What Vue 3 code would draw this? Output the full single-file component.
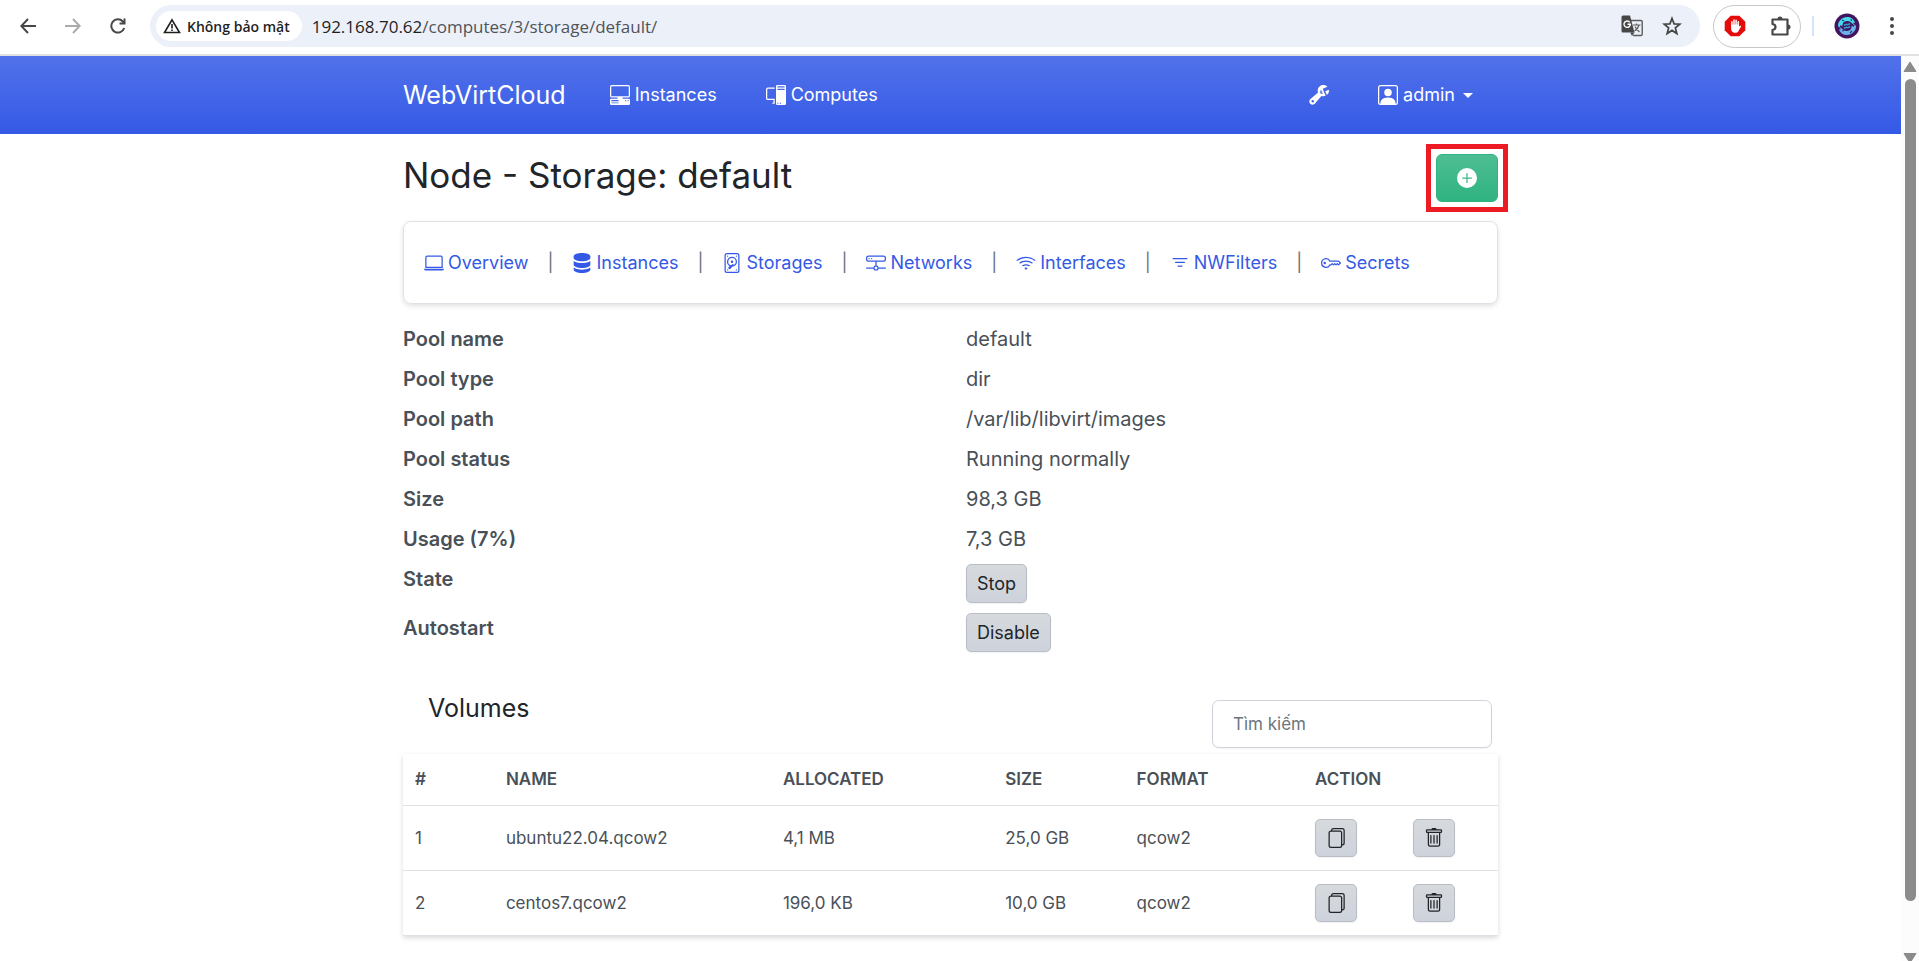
<script setup>
import { ref, computed } from 'vue'

const icons = {
  pcHorizontal: ['M1.5 0A1.5 1.5 0 0 0 0 1.5v7A1.5 1.5 0 0 0 1.5 10H6v1H1a1 1 0 0 0-1 1v3a1 1 0 0 0 1 1h14a1 1 0 0 0 1-1v-3a1 1 0 0 0-1-1h-5v-1h4.5A1.5 1.5 0 0 0 16 8.5v-7A1.5 1.5 0 0 0 14.5 0zm0 1h13a.5.5 0 0 1 .5.5v7a.5.5 0 0 1-.5.5h-13a.5.5 0 0 1-.5-.5v-7a.5.5 0 0 1 .5-.5M12 12.5a.5.5 0 1 1 1 0 .5.5 0 0 1-1 0m2 0a.5.5 0 1 1 1 0 .5.5 0 0 1-1 0M1.5 12h5a.5.5 0 0 1 0 1h-5a.5.5 0 0 1 0-1M1 14.25a.25.25 0 0 1 .25-.25h5.5a.25.25 0 1 1 0 .5h-5.5a.25.25 0 0 1-.25-.25'],
  pc: ['M8 1a1 1 0 0 1 1-1h6a1 1 0 0 1 1 1v14a1 1 0 0 1-1 1H9a1 1 0 0 1-1-1zm1 13.5a.5.5 0 1 0 1 0 .5.5 0 0 0-1 0m2 0a.5.5 0 1 0 1 0 .5.5 0 0 0-1 0M9.5 1a.5.5 0 0 0 0 1h5a.5.5 0 0 0 0-1zM9 3.5a.5.5 0 0 0 .5.5h5a.5.5 0 0 0 0-1h-5a.5.5 0 0 0-.5.5M1.5 2A1.5 1.5 0 0 0 0 3.5v7A1.5 1.5 0 0 0 1.5 12H6v2h-.5a.5.5 0 0 0 0 1H7v-4H1.5a.5.5 0 0 1-.5-.5v-7a.5.5 0 0 1 .5-.5H7V2z'],
  wrench: ['M16 4.5a4.5 4.5 0 0 1-1.703 3.526L13 5l2.959-1.11q.04.3.041.61', 'M11.5 9c.653 0 1.273-.139 1.833-.39L12 5.5 11 3l3.826-1.53A4.5 4.5 0 0 0 7.29 6.092l-6.116 5.096a2.583 2.583 0 1 0 3.638 3.638L9.908 8.71A4.5 4.5 0 0 0 11.5 9m-1.292-4.361-.596.893.809-.27a.25.25 0 0 1 .287.377l-.596.893.809-.27.158.475-1.5.5a.25.25 0 0 1-.287-.376l.596-.893-.809.27a.25.25 0 0 1-.287-.377l.596-.893-.809.27-.158-.475 1.5-.5a.25.25 0 0 1 .287.376M3 14a1 1 0 1 1 0-2 1 1 0 0 1 0 2'],
  person: ['M11 6a3 3 0 1 1-6 0 3 3 0 0 1 6 0', 'M2 0a2 2 0 0 0-2 2v12a2 2 0 0 0 2 2h12a2 2 0 0 0 2-2V2a2 2 0 0 0-2-2zm12 1a1 1 0 0 1 1 1v12a1 1 0 0 1-1 1v-1c0-1-1-4-6-4s-6 3-6 4v1a1 1 0 0 1-1-1V2a1 1 0 0 1 1-1z'],
  laptop: ['M13.5 3a.5.5 0 0 1 .5.5V11H2V3.5a.5.5 0 0 1 .5-.5zm-11-1A1.5 1.5 0 0 0 1 3.5V12h14V3.5A1.5 1.5 0 0 0 13.5 2zM0 12.5h16a1.5 1.5 0 0 1-1.5 1.5h-13A1.5 1.5 0 0 1 0 12.5'],
  server: ['M1.333 2.667C1.333 1.194 4.318 0 8 0s6.667 1.194 6.667 2.667V4c0 1.473-2.985 2.667-6.667 2.667S1.333 5.473 1.333 4z', 'M1.333 6.334v3C1.333 10.805 4.318 12 8 12s6.667-1.194 6.667-2.667V6.334a6.5 6.5 0 0 1-1.458.79C11.81 7.684 9.967 8 8 8s-3.809-.317-5.208-.876a6.5 6.5 0 0 1-1.458-.79z', 'M14.667 11.668a6.5 6.5 0 0 1-1.458.789c-1.4.56-3.242.876-5.21.876-1.966 0-3.809-.316-5.208-.876a6.5 6.5 0 0 1-1.458-.79v1.666C1.333 14.806 4.318 16 8 16s6.667-1.194 6.667-2.667z'],
  hdd: ['M12 2.5a.5.5 0 1 1-1 0 .5.5 0 0 1 1 0m0 11a.5.5 0 1 1-1 0 .5.5 0 0 1 1 0m-7.5.5a.5.5 0 1 0 0-1 .5.5 0 0 0 0 1M5 2.5a.5.5 0 1 1-1 0 .5.5 0 0 1 1 0M8 8a1 1 0 1 0 0-2 1 1 0 0 0 0 2', 'M12 7a4 4 0 0 1-3.937 4c-.537.813-1.02 1.515-1.181 1.677a1.102 1.102 0 0 1-1.56-1.559c.1-.098.396-.314.795-.588A4 4 0 0 1 8 3a4 4 0 0 1 4 4m-1 0a3 3 0 1 0-3.891 2.865c.667-.44 1.396-.91 1.955-1.268.224-.144.483.115.34.34l-.62.96A3 3 0 0 0 11 7', 'M2 2a2 2 0 0 1 2-2h8a2 2 0 0 1 2 2v12a2 2 0 0 1-2 2H4a2 2 0 0 1-2-2zm2-1a1 1 0 0 0-1 1v12a1 1 0 0 0 1 1h8a1 1 0 0 0 1-1V2a1 1 0 0 0-1-1z'],
  network: ['M4.5 5a.5.5 0 1 0 0-1 .5.5 0 0 0 0 1M3 4.5a.5.5 0 1 1-1 0 .5.5 0 0 1 1 0', 'M0 4a2 2 0 0 1 2-2h12a2 2 0 0 1 2 2v1a2 2 0 0 1-2 2H8.5v3a1.5 1.5 0 0 1 1.5 1.5h5.5a.5.5 0 0 1 0 1H10A1.5 1.5 0 0 1 8.5 14h-1A1.5 1.5 0 0 1 6 12.5H.5a.5.5 0 0 1 0-1H6A1.5 1.5 0 0 1 7.5 10V7H2a2 2 0 0 1-2-2zm1 0v1a1 1 0 0 0 1 1h12a1 1 0 0 0 1-1V4a1 1 0 0 0-1-1H2a1 1 0 0 0-1 1m6 7.5v1a.5.5 0 0 0 .5.5h1a.5.5 0 0 0 .5-.5v-1a.5.5 0 0 0-.5-.5h-1a.5.5 0 0 0-.5.5'],
  wifi: ['M15.384 6.115a.485.485 0 0 0-.047-.736A12.44 12.44 0 0 0 8 3C5.259 3 2.723 3.882.663 5.379a.485.485 0 0 0-.048.736.52.52 0 0 0 .668.05A11.45 11.45 0 0 1 8 4c2.507 0 4.827.802 6.716 2.164.205.148.49.13.668-.049', 'M13.229 8.271a.482.482 0 0 0-.063-.745A9.46 9.46 0 0 0 8 6c-1.905 0-3.68.56-5.166 1.526a.48.48 0 0 0-.063.745.525.525 0 0 0 .652.065A8.46 8.46 0 0 1 8 7a8.46 8.46 0 0 1 4.576 1.336c.206.132.48.108.653-.065m-2.183 2.183c.226-.226.185-.605-.1-.75A6.5 6.5 0 0 0 8 9c-1.06 0-2.062.254-2.946.704-.285.145-.326.524-.1.75l.015.015c.16.16.407.19.611.09A5.5 5.5 0 0 1 8 10c.868 0 1.69.201 2.42.56.203.1.45.07.61-.091zM9.06 12.44c.196-.196.198-.52-.04-.66A2 2 0 0 0 8 11.5a2 2 0 0 0-1.02.28c-.238.14-.236.464-.04.66l.706.706a.5.5 0 0 0 .707 0l.707-.707z'],
  filter: ['M6 10.5a.5.5 0 0 1 .5-.5h3a.5.5 0 0 1 0 1h-3a.5.5 0 0 1-.5-.5m-2-3a.5.5 0 0 1 .5-.5h7a.5.5 0 0 1 0 1h-7a.5.5 0 0 1-.5-.5m-2-3a.5.5 0 0 1 .5-.5h11a.5.5 0 0 1 0 1h-11a.5.5 0 0 1-.5-.5'],
  key: ['M0 8a4 4 0 0 1 7.465-2H14a.5.5 0 0 1 .354.146l1.5 1.5a.5.5 0 0 1 0 .708l-1.5 1.5a.5.5 0 0 1-.708 0L13 9.207l-.646.647a.5.5 0 0 1-.708 0L11 9.207l-.646.647a.5.5 0 0 1-.708 0L9 9.207l-.646.647A.5.5 0 0 1 8 10h-.535A4 4 0 0 1 0 8m4-3a3 3 0 1 0 2.712 4.285A.5.5 0 0 1 7.163 9h.63l.853-.854a.5.5 0 0 1 .708 0l.646.647.646-.647a.5.5 0 0 1 .708 0l.646.647.646-.647a.5.5 0 0 1 .708 0l.646.647.793-.793-1-1h-6.63a.5.5 0 0 1-.451-.285A3 3 0 0 0 4 5', 'M4 8a1 1 0 1 1-2 0 1 1 0 0 1 2 0'],
  plus: ['M16 8A8 8 0 1 1 0 8a8 8 0 0 1 16 0M8.5 4.5a.5.5 0 0 0-1 0v3h-3a.5.5 0 0 0 0 1h3v3a.5.5 0 0 0 1 0v-3h3a.5.5 0 0 0 0-1h-3z'],
  files: ['M13 0H6a2 2 0 0 0-2 2 2 2 0 0 0-2 2v10a2 2 0 0 0 2 2h7a2 2 0 0 0 2-2 2 2 0 0 0 2-2V2a2 2 0 0 0-2-2m0 13V4a2 2 0 0 0-2-2H5a1 1 0 0 1 1-1h7a1 1 0 0 1 1 1v10a1 1 0 0 1-1 1M3 4a1 1 0 0 1 1-1h7a1 1 0 0 1 1 1v10a1 1 0 0 1-1 1H4a1 1 0 0 1-1-1z'],
  trash: ['M5.5 5.5A.5.5 0 0 1 6 6v6a.5.5 0 0 1-1 0V6a.5.5 0 0 1 .5-.5m2.5 0a.5.5 0 0 1 .5.5v6a.5.5 0 0 1-1 0V6a.5.5 0 0 1 .5-.5m3 .5a.5.5 0 0 0-1 0v6a.5.5 0 0 0 1 0z', 'M14.5 3a1 1 0 0 1-1 1H13v9a2 2 0 0 1-2 2H5a2 2 0 0 1-2-2V4h-.5a1 1 0 0 1-1-1V2a1 1 0 0 1 1-1H6a1 1 0 0 1 1-1h2a1 1 0 0 1 1 1h3.5a1 1 0 0 1 1 1zM4.118 4 4 4.059V13a1 1 0 0 0 1 1h6a1 1 0 0 0 1-1V4.059L11.882 4zM2.5 3h11V2h-11z']
}

const tabs = [
  { label: 'Overview', icon: 'laptop' },
  { label: 'Instances', icon: 'server' },
  { label: 'Storages', icon: 'hdd' },
  { label: 'Networks', icon: 'network' },
  { label: 'Interfaces', icon: 'wifi' },
  { label: 'NWFilters', icon: 'filter' },
  { label: 'Secrets', icon: 'key' }
]

const details = [
  { label: 'Pool name', value: 'default' },
  { label: 'Pool type', value: 'dir' },
  { label: 'Pool path', value: '/var/lib/libvirt/images' },
  { label: 'Pool status', value: 'Running normally' },
  { label: 'Size', value: '98,3 GB' },
  { label: 'Usage (7%)', value: '7,3 GB' },
  { label: 'State', action: 'Stop' },
  { label: 'Autostart', action: 'Disable' }
]

const volumes = [
  { id: 1, name: 'ubuntu22.04.qcow2', allocated: '4,1 MB', size: '25,0 GB', format: 'qcow2' },
  { id: 2, name: 'centos7.qcow2', allocated: '196,0 KB', size: '10,0 GB', format: 'qcow2' }
]

const query = ref('')
const shownVolumes = computed(() =>
  volumes.filter((v) => v.name.includes(query.value.trim().toLowerCase()))
)
</script>

<template>
  <div class="window">
    <div class="toolbar">
      <button class="tool" type="button" aria-label="Back">
        <svg width="16" height="16" viewBox="0 0 16 16"><path d="M16 8H1.500M8 1 1.300 8 8 15" fill="none" stroke="#474747" stroke-width="2" /></svg>
      </button>
      <button class="tool" type="button" aria-label="Forward">
        <svg width="16" height="16" viewBox="0 0 16 16"><path d="M0 8h14.500M8 1l6.700 7L8 15" fill="none" stroke="#ababab" stroke-width="2" /></svg>
      </button>
      <button class="tool" type="button" aria-label="Reload">
        <svg width="16" height="16" viewBox="0 0 16 16"><path d="M14.200 10A6.600 6.600 0 1 1 12.800 3.500L14.500 5.400" fill="none" stroke="#474747" stroke-width="2" /><path d="M15.500.5v6h-6v-2h4v-4z" fill="#474747" /></svg>
      </button>
      <div class="omnibox">
        <button class="chip" type="button">
          <svg width="18" height="16" viewBox="0 0 18 16"><path d="M9 1.800 16.500 14.500H1.500z" fill="none" stroke="#1f1f1f" stroke-width="1.600" /><path d="M9 6v4.500M9 11.500v1.500" stroke="#1f1f1f" stroke-width="1.600" /></svg>
          <span>Không bảo mật</span>
        </button>
        <span class="url"><span class="host">192.168.70.62</span>/computes/3/storage/default/</span>
        <button class="tool translate" type="button" aria-label="Translate">
          <svg width="22" height="22" viewBox="0 0 22 22">
            <path d="M9.500 5.500h10.500a1.200 1.200 0 0 1 1.200 1.200v12.600a1.200 1.200 0 0 1-1.200 1.200H12" fill="none" stroke="#5c5c5c" stroke-width="1.400" />
            <path d="M2 .5h7l4.500 17H2A1.500 1.500 0 0 1 .5 16V2A1.500 1.500 0 0 1 2 .5z" fill="#474747" />
            <path d="M9.200 17.500h4.300L11 21z" fill="#474747" />
            <path d="M8.800 7.300A3.200 3.200 0 1 0 9.400 9.300H6.500" fill="none" stroke="#fff" stroke-width="1.400" />
            <path d="M12 10h7.500M15.500 8.500V10M18 10c-.6 2.500-2.500 4.800-4.500 6M14 11.500c1 2 2.700 4 4.500 5.500" fill="none" stroke="#5c5c5c" stroke-width="1.200" />
          </svg>
        </button>
        <button class="tool" type="button" aria-label="Bookmark">
          <svg width="20" height="20" viewBox="0 0 20 20"><path d="m10 2.500 2.100 5.300 5.700.4-4.400 3.700 1.400 5.600-4.800-3.100-4.800 3.100 1.400-5.600-4.400-3.700 5.700-.4z" fill="none" stroke="#474747" stroke-width="1.800" /></svg>
        </button>
      </div>
      <div class="extensions">
        <button class="tool" type="button" aria-label="Ad blocker">
          <svg width="22" height="22" viewBox="0 0 22 22">
            <path d="M6.700.8h8.600l6 6v8.400l-6 6H6.700l-6-6V6.800z" fill="#e60b0b" />
            <path d="M7.900 11.500V6.800M10 10.500V5M12.100 10.500V5.200M14.200 11.500V6.800" stroke="#fff" stroke-width="1.500" stroke-linecap="round" />
            <path d="M7.100 9.500h7.800v2.300l1.300-1.300 1 .7-2.300 4c-.8 1.800-1.900 2.600-4 2.600-2.500 0-3.800-1.700-3.800-4.300z" fill="#fff" />
          </svg>
        </button>
        <button class="tool" type="button" aria-label="Extensions">
          <svg width="22" height="22" viewBox="0 0 22 22">
            <path d="M2.500 4.500h15v15h-15V15q3-.5 3-3t-3-3z" fill="none" stroke="#474747" stroke-width="2.200" stroke-linejoin="round" />
            <path d="M7.500 4a2.500 2.500 0 0 1 5 0zM18 9.500a2.500 2.500 0 0 1 0 5z" fill="#474747" />
          </svg>
        </button>
      </div>
      <span class="divider"></span>
      <button class="tool" type="button" aria-label="Profile">
        <svg width="26" height="26" viewBox="0 0 26 26">
          <circle cx="13" cy="13" r="12.500" fill="#431560" />
          <path d="M4 12.500C4 8 8.500 3.500 14 4c3.500.4 6 2.500 7.200 6l-1.700-.8.3 3C18 9.500 15.500 7.800 12.800 8 9.500 8.300 8.300 10.500 8.300 13.500L6.500 12l-1.300 3z" fill="#45dcec" />
          <path d="M22 13.500c0 4.500-4.500 9-10 8.500-3.500-.4-6-2.500-7.200-6l1.700.8-.3-3c1.800 2.700 4.300 4.400 7 4.200 3.300-.3 4.500-2.500 4.500-5.500l1.800 1.500 1.300-3z" fill="#6bb4ea" />
          <path d="M10 12.500c2-2.500 4 .5 6-2M10 15.500c2-2.500 4 .5 6-2" fill="none" stroke="#2ba0d8" stroke-width="1.500" />
          <path d="m8 7 2 1M16 20l2-2M17 6l.5 2M8 18l2-.5" stroke="#25358c" stroke-width="1.200" />
        </svg>
      </button>
      <button class="tool menu" type="button" aria-label="Menu">
        <svg width="6" height="20" viewBox="0 0 6 20" fill="#474747"><circle cx="3" cy="3" r="2" /><circle cx="3" cy="10" r="2" /><circle cx="3" cy="17" r="2" /></svg>
      </button>
    </div>

    <div class="viewport">
      <div class="page">
        <header class="topbar">
          <nav class="container navbar">
            <a class="brand" href="#">WebVirtCloud</a>
            <a class="nav-link" href="#instances">
              <svg class="icon" viewBox="0 0 16 16"><path v-for="d in icons.pcHorizontal" :key="d" :d="d" /></svg>Instances
            </a>
            <a class="nav-link" href="#computes">
              <svg class="icon" viewBox="0 0 16 16"><path v-for="d in icons.pc" :key="d" :d="d" /></svg>Computes
            </a>
            <a class="nav-link settings" href="#settings" aria-label="Settings">
              <svg class="icon" viewBox="0 0 16 16"><path v-for="d in icons.wrench" :key="d" :d="d" /></svg>
            </a>
            <button class="nav-link user" type="button">
              <svg class="icon" viewBox="0 0 16 16"><path v-for="d in icons.person" :key="d" :d="d" /></svg>admin
              <span class="caret"></span>
            </button>
          </nav>
        </header>

        <main class="container">
          <div class="title-row">
            <h1>Node - Storage: default</h1>
            <div class="highlight">
              <button class="add" type="button" aria-label="Add volume">
                <svg class="icon" viewBox="0 0 16 16"><path v-for="d in icons.plus" :key="d" :d="d" /></svg>
              </button>
            </div>
          </div>

          <nav class="tabs">
            <template v-for="(tab, i) in tabs" :key="tab.label">
              <span v-if="i" class="bar">|</span>
              <a :href="'#' + tab.label.toLowerCase()">
                <svg class="icon" viewBox="0 0 16 16"><path v-for="d in icons[tab.icon]" :key="d" :d="d" /></svg>{{ tab.label }}
              </a>
            </template>
          </nav>

          <dl class="details">
            <template v-for="row in details" :key="row.label">
              <dt>{{ row.label }}</dt>
              <dd>
                <button v-if="row.action" class="btn" type="button">{{ row.action }}</button>
                <template v-else>{{ row.value }}</template>
              </dd>
            </template>
          </dl>

          <div class="volumes-head">
            <h2>Volumes</h2>
            <input v-model="query" type="text" placeholder="Tìm kiếm" aria-label="Tìm kiếm" />
          </div>

          <table>
            <colgroup>
              <col class="c-id" /><col class="c-name" /><col class="c-alloc" /><col class="c-size" /><col class="c-format" /><col class="c-act" /><col class="c-act" />
            </colgroup>
            <thead>
              <tr>
                <th>#</th>
                <th>NAME</th>
                <th>ALLOCATED</th>
                <th>SIZE</th>
                <th>FORMAT</th>
                <th colspan="2">ACTION</th>
              </tr>
            </thead>
            <tbody>
              <tr v-for="v in shownVolumes" :key="v.id">
                <td>{{ v.id }}</td>
                <td>{{ v.name }}</td>
                <td>{{ v.allocated }}</td>
                <td>{{ v.size }}</td>
                <td>{{ v.format }}</td>
                <td>
                  <button class="btn" type="button" :aria-label="'Clone ' + v.name">
                    <svg class="icon" viewBox="0 0 16 16"><path v-for="d in icons.files" :key="d" :d="d" /></svg>
                  </button>
                </td>
                <td>
                  <button class="btn" type="button" :aria-label="'Delete ' + v.name">
                    <svg class="icon" viewBox="0 0 16 16"><path v-for="d in icons.trash" :key="d" :d="d" /></svg>
                  </button>
                </td>
              </tr>
            </tbody>
          </table>
        </main>
      </div>

      <div class="scrollbar" aria-hidden="true">
        <svg width="14" height="12" viewBox="0 0 14 12"><path d="M7 1 13 10.500H1z" fill="#8b8b8b" stroke="#8b8b8b" stroke-linejoin="round" /></svg>
        <div class="track"><div class="thumb"></div></div>
        <svg width="14" height="9" viewBox="0 0 14 9"><path d="M7 11 1 1.500h12z" fill="#8b8b8b" stroke="#8b8b8b" stroke-linejoin="round" /></svg>
      </div>
    </div>
  </div>
</template>

<style>
body {
  margin: 0;
  background: #fff;
}
</style>

<style scoped>
* {
  box-sizing: border-box;
}

.window {
  display: flex;
  flex-direction: column;
  height: 100vh;
  overflow: hidden;
  font-family: Inter, "Liberation Sans", sans-serif;
  color: #495057;
}

button {
  font: inherit;
  cursor: pointer;
}

a {
  text-decoration: none;
}

svg {
  display: block;
  flex: none;
}

.icon {
  width: 20px;
  height: 20px;
  fill: currentColor;
}

/* Browser toolbar */
.toolbar {
  display: flex;
  align-items: center;
  flex: none;
  height: 56px;
  padding: 0 24px 2px 20px;
  border-bottom: 2px solid #dfe2df;
  font-family: "Open Sans", "Noto Sans", sans-serif;
}

.tool {
  padding: 0;
  border: 0;
  background: none;
  margin-right: 29px;
}

.omnibox {
  display: flex;
  align-items: center;
  flex: 1;
  height: 42px;
  margin-left: -5px;
  padding: 0 18px 0 6px;
  border-radius: 21px;
  background: #ecf0f9;
}

.omnibox .tool {
  margin-right: 0;
}

.omnibox .translate {
  margin: 0 19px 0 auto;
}

.chip {
  display: flex;
  align-items: center;
  gap: 6px;
  height: 30px;
  padding: 0 12px 0 7px;
  border: 0;
  border-radius: 15px;
  background: #fff;
  color: #1f1f1f;
  font-size: 14px;
  font-weight: 600;
  white-space: nowrap;
}

.url {
  margin-left: 10px;
  font-size: 17px;
  color: #50545a;
  white-space: nowrap;
}

.host {
  color: #1f1f1f;
}

.extensions {
  display: flex;
  align-items: center;
  justify-content: space-between;
  width: 88px;
  height: 43px;
  margin-left: 13px;
  padding: 0 8px 0 10px;
  border: 1px solid #c7c7c7;
  border-radius: 22px;
}

.extensions .tool {
  margin: 0;
}

.divider {
  width: 2px;
  height: 20px;
  margin: 0 20px 0 11px;
  background: #d3e3fd;
}

.tool.menu {
  margin-right: 0;
}

/* Page area */
.viewport {
  display: flex;
  flex: 1;
  min-height: 0;
}

.page {
  flex: 1;
  min-width: 0;
}

.container {
  width: 100%;
  max-width: 1095px;
  margin: 0 auto;
}

.topbar {
  height: 78px;
  background: linear-gradient(180deg, #5272ea, #3459e6);
}

.navbar {
  display: flex;
  align-items: center;
  height: 78px;
  padding-right: 25px;
}

.brand {
  margin-right: 44px;
  font-size: 25px;
  color: #fff;
}

.nav-link {
  display: flex;
  align-items: center;
  gap: 5px;
  margin-right: 49px;
  padding: 0;
  border: 0;
  background: none;
  font-size: 18px;
  line-height: 28px;
  color: #fff;
}

.nav-link.settings {
  margin-left: auto;
}

.nav-link.user {
  margin-right: 0;
}

.caret {
  margin-left: 3px;
  border: 5px solid transparent;
  border-top-color: #fff;
  border-bottom: 0;
}

.title-row {
  display: flex;
  justify-content: space-between;
  align-items: flex-start;
  margin-right: -10px;
  padding-top: 10px;
}

h1 {
  margin: 10px 0 0;
  font-size: 35px;
  font-weight: 400;
  line-height: 42px;
  color: #212529;
}

.highlight {
  padding: 5px;
  border: 5px solid #ed1c24;
}

.add {
  display: flex;
  align-items: center;
  justify-content: center;
  width: 62px;
  height: 48px;
  border: 1px solid #2fb380;
  border-radius: 6px;
  background: linear-gradient(180deg, #4ebe93, #2fb380);
  color: #fff;
}

.tabs {
  display: flex;
  align-items: center;
  height: 83px;
  margin-top: 9px;
  padding: 0 20px;
  border: 1px solid #dee2e6;
  border-radius: 8px;
  box-shadow: 0 2px 5px rgba(0, 0, 0, 0.12);
  font-size: 18px;
}

.tabs a {
  display: flex;
  align-items: center;
  gap: 4px;
  color: #3459e6;
}

.bar {
  margin: 0 19px;
  color: #6c757d;
}

/* Pool details */
.details {
  display: grid;
  grid-template-columns: 563fr 532fr;
  margin: 15px 0 0;
  font-size: 20px;
  line-height: 30px;
}

.details dt,
.details dd {
  margin: 0;
  padding: 5px 0;
}

.details dt {
  font-weight: 600;
}

.btn {
  display: flex;
  align-items: center;
  justify-content: center;
  height: 39px;
  padding: 0 10px;
  border: 1px solid #b9bec6;
  border-radius: 5px;
  background: linear-gradient(180deg, #d6dadd, #ced2db);
  box-shadow: 0 1px 2px rgba(0, 0, 0, 0.06);
  font-size: 18px;
  color: #212529;
}

.volumes-head {
  display: flex;
  justify-content: space-between;
  align-items: flex-start;
  margin-top: 43px;
  padding: 0 6px 0 25px;
}

h2 {
  margin: -7px 0 0;
  font-size: 25px;
  font-weight: 400;
  line-height: 30px;
  color: #212529;
}

input {
  width: 280px;
  height: 48px;
  padding: 0 20px;
  border: 1px solid #ced4da;
  border-radius: 7px;
  background: #fff;
  box-shadow: 0 1px 2px rgba(0, 0, 0, 0.05);
  font: inherit;
  font-size: 17px;
  color: #495057;
}

input::placeholder {
  color: #6c757d;
  opacity: 1;
}

table {
  width: 100%;
  margin-top: 6px;
  border-collapse: collapse;
  table-layout: fixed;
  box-shadow: 0 2px 5px rgba(0, 0, 0, 0.15);
  font-size: 17px;
}

.c-id { width: 8.3%; }
.c-name { width: 25.3%; }
.c-alloc { width: 20.3%; }
.c-size { width: 12%; }
.c-format { width: 16.3%; }
.c-act { width: 8.9%; }

th,
td {
  padding: 0 12px;
  border-bottom: 1px solid #dee2e6;
  text-align: left;
}

th {
  height: 51px;
  font-weight: 600;
}

td {
  height: 65px;
}

td .btn {
  width: 42px;
  height: 38px;
  padding: 0;
}

/* Scrollbar */
.scrollbar {
  display: flex;
  flex-direction: column;
  align-items: center;
  flex: none;
  width: 18px;
  padding-top: 5px;
  background: #fcfcfc;
}

.track {
  flex: 1;
  padding: 6px 0 51px;
}

.thumb {
  width: 11px;
  height: 100%;
  border-radius: 6px;
  background: #8b8b8b;
}
</style>
